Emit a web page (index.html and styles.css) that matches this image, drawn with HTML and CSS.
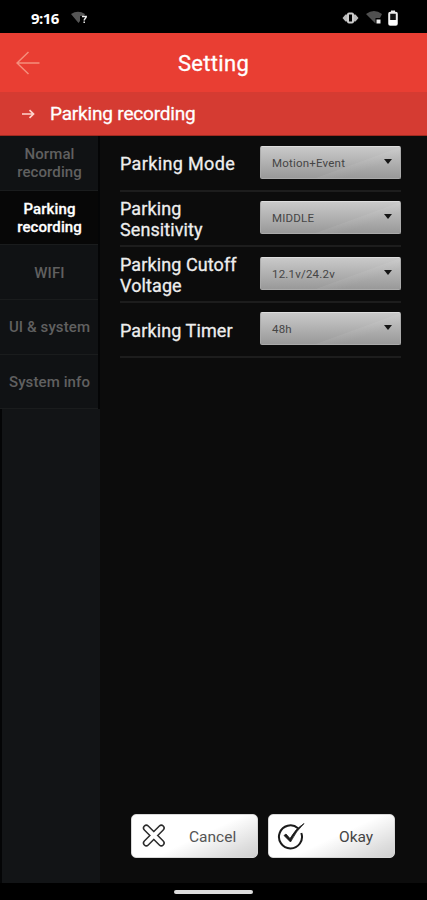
FILE: index.html
```html
<!DOCTYPE html>
<html lang="en">
<head>
<meta charset="utf-8">
<title>Setting</title>
<link rel="stylesheet" href="styles.css">
</head>
<body>
<div class="screen">
  <div class="status">
    <span class="time">9:16</span>
    <svg class="wifi-unknown" width="18" height="14" viewBox="0 0 18 14"><path d="M0 3Q7-1.500 14 3L13 5H9V10L7.500 12Z" fill="#555"/><path d="M11 5.500h4.200c0 2-2 2-2 4M13.200 10.500v1.500" fill="none" stroke="#eee" stroke-width="1.500"/></svg>
    <svg class="vibrate" width="17" height="14" viewBox="0 0 17 14"><path d="M.5 7 3.500 3.500H6V10.500H3.500ZM16.500 7 13.500 3.500H11V10.500H13.500Z" fill="#bbb"/><rect x="6" y="2.500" width="5" height="9" rx="1" fill="#000" stroke="#ccc" stroke-width="2"/></svg>
    <svg class="wifi" width="17" height="15" viewBox="0 0 17 15"><path d="M0 4Q8-2 16 4L14 8H9.500V13.500Z" fill="#505050"/><rect x="10.500" y="9.500" width="4" height="4" fill="#eee"/></svg>
    <svg class="battery" width="10" height="16" viewBox="0 0 10 16"><path d="M3 .5h4v2.500H3z" fill="#eee"/><rect x="1.200" y="2.800" width="7.600" height="12" rx="1" fill="#111" stroke="#eee" stroke-width="2"/><path d="M1 10h8v5H1z" fill="#fff"/></svg>
  </div>
  <header class="header">
    <svg class="back" width="24" height="24" viewBox="0 0 24 24"><path d="M23.500 12H1M12.500 1 1 12 12.500 23" fill="none" stroke="#f58e7c" stroke-width="1.500"/></svg>
    <h1 class="title">Setting</h1>
  </header>
  <div class="crumb">
    <svg class="crumb-arrow" width="13" height="10" viewBox="0 0 13 10"><path d="M0 5H11M7.500 1.200 11.500 5 7.500 8.800" fill="none" stroke="#ffd5cd" stroke-width="1.700"/></svg>
    <span class="crumb-text">Parking recording</span>
  </div>
  <main class="body">
    <nav class="side">
      <div class="tab">Normal<br>recording</div>
      <div class="tab active">Parking<br>recording</div>
      <div class="tab">WIFI</div>
      <div class="tab">UI &amp; system</div>
      <div class="tab">System info</div>
      <div class="side-fill"></div>
    </nav>
    <section class="content">
      <div class="row"><span class="label wide">Parking Mode</span><div class="select"><span>Motion+Event</span><i class="caret"></i></div></div>
      <div class="row"><span class="label">Parking<br>Sensitivity</span><div class="select"><span>MIDDLE</span><i class="caret"></i></div></div>
      <div class="row"><span class="label">Parking Cutoff<br>Voltage</span><div class="select"><span>12.1v/24.2v</span><i class="caret"></i></div></div>
      <div class="row"><span class="label">Parking Timer</span><div class="select"><span>48h</span><i class="caret"></i></div></div>
      <div class="actions">
        <div class="button"><svg width="24" height="24" viewBox="0 0 24 24"><path d="M4.300 4 19.300 19M19.300 4 4.300 19" stroke="#2b2b2b" stroke-width="7" stroke-linecap="round"/><path d="M4.300 4 19.300 19M19.300 4 4.300 19" stroke="#fff" stroke-width="4" stroke-linecap="round"/></svg><span class="cancel-text">Cancel</span></div>
        <div class="button okay"><svg width="28" height="28" viewBox="0 0 28 28"><path d="M21 6.200A11.500 11.500 0 1 0 24.300 11" fill="none" stroke="#1b1b1b" stroke-width="2"/><path d="M7 13.500 9 12 13 16.500Q19 6 27 1.500 19 9 13.500 20Z" fill="#1b1b1b" stroke="#1b1b1b" stroke-width=".8"/></svg><span class="okay-text">Okay</span></div>
      </div>
    </section>
  </main>
  <footer class="navbar"><div class="handle"></div></footer>
</div>
</body>
</html>
```
FILE: styles.css
```css
* { box-sizing: border-box; }
body { margin: 0; background: #000; font-family: Roboto, sans-serif; }
.screen { width: 427px; height: 900px; display: flex; flex-direction: column; overflow: hidden; }
.status { height: 33px; display: flex; align-items: center; padding: 2px 29px 0 31px; background: #000; }
.time { width: 40px; color: #fff; font: 700 15px/18px "Open Sans", sans-serif; letter-spacing: -.6px; }
.vibrate { margin-left: auto; }
.wifi { margin-left: 7px; }
.battery { margin-left: 5px; }
.header { height: 59px; display: grid; grid-template-columns: 40px 1fr 40px; align-items: center; background: #e93e33; }
.back { margin-left: 16px; }
.title { margin: 3px 0 0; text-align: center; color: #fff; font-size: 22px; line-height: 28px; font-weight: 400; letter-spacing: .3px; -webkit-text-stroke: .3px #fff; }
.crumb { height: 44px; display: flex; align-items: center; padding-left: 22px; background: #d53b32; border-bottom: 1px solid #a12a20; }
.crumb-arrow { margin-right: 15px; }
.crumb-text { color: #fff; font-size: 19px; line-height: 24px; letter-spacing: -.18px; -webkit-text-stroke: .3px #fff; padding-top: 1px; }
.body { height: 747px; display: flex; background: #0c0c0c; }
.side { width: 100px; display: flex; flex-direction: column; background: #040506; }
.tab { height: 54.7px; width: 98px; padding: 1px 0 0 1px; flex: none; display: flex; align-items: center; justify-content: center; text-align: center; background: #101214; border-bottom: 1px solid #1a1c1d; color: #606060; font-size: 15px; line-height: 18px; font-weight: 500; letter-spacing: .1px; }
.tab.active { background: #070707; color: #fff; -webkit-text-stroke: .3px #fff; }
.side-fill { flex: 1; margin-left: 2px; background: #121416; }
.content { flex: 1; display: flex; flex-direction: column; padding: 0 26px 25px 20px; }
.row { height: 55.5px; flex: none; display: flex; align-items: center; justify-content: space-between; border-bottom: 2px solid #1d1d1d; }
.label { color: #eee; font-size: 18px; line-height: 21px; letter-spacing: .1px; -webkit-text-stroke: .3px #eee; padding-top: 2px; }
.label.wide { letter-spacing: .35px; }
.select { width: 141px; height: 33px; margin-top: -1px; padding: 1px 9px 0 11px; display: flex; align-items: center; justify-content: space-between; border: 1px solid #aaa; border-top-color: #ddd; border-radius: 2px; background: linear-gradient(160deg, transparent 62%, rgba(255,255,255,.06) 63%, transparent 75%), linear-gradient(#c9c9c9, #999); color: #454545; font-size: 11.5px; letter-spacing: .2px; }
.caret { width: 0; height: 0; margin: -3px -1px 0 0; border: 4px solid transparent; border-top: 5px solid #161616; border-bottom: 0; }
.actions { margin: auto 5px 0 11px; display: flex; gap: 10px; }
.button { width: 127px; height: 44px; padding-left: 10px; display: flex; align-items: center; border: 1px solid #d8d8d8; border-radius: 5px; background: linear-gradient(155deg, #fff 52%, #ddd 85%, #d0d0d0); color: #555; font-size: 15.5px; }
.button svg { flex: none; }
.okay { padding-left: 8px; }
.cancel-text { margin: 2px 0 0 23px; }
.okay-text { margin: 2px 0 0 34px; color: #444; }
.navbar { height: 17px; background: #000; display: flex; justify-content: center; align-items: center; padding-top: 1px; }
.handle { width: 79px; height: 4px; border-radius: 2px; background: #ddd; }
```
